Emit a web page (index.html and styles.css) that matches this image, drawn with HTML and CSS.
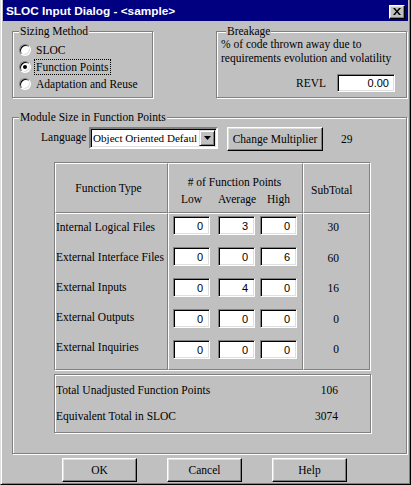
FILE: index.html
```html
<!DOCTYPE html>
<html>
<head>
<meta charset="utf-8">
<title>SLOC Input Dialog</title>
<link rel="stylesheet" href="styles.css">
</head>
<body>
<div class="window">
  <div class="titlebar">
    <span class="title">SLOC Input Dialog - &lt;sample&gt;</span>
    <span class="close"><svg width="8" height="7" viewBox="0 0 8 7"><path d="M0 0h2l2 2.4 2-2.4h2l-3 3.5 3 3.5h-2l-2-2.4-2 2.4h-2l3-3.5z" fill="#000"/></svg></span>
  </div>
  <div class="content">
    <div class="top-row">
      <fieldset class="group sizing">
        <legend>Sizing Method</legend>
        <div class="radio"><span class="radio-box"></span><span class="radio-text">SLOC</span></div>
        <div class="radio"><span class="radio-box checked"></span><span class="radio-text focus">Function Points</span></div>
        <div class="radio"><span class="radio-box"></span><span class="radio-text">Adaptation and Reuse</span></div>
      </fieldset>
      <fieldset class="group breakage">
        <legend>Breakage</legend>
        <p class="note">% of code thrown away due to<br>requirements evolution and volatility</p>
        <div class="revl-row"><span class="revl-label">REVL</span><span class="field revl">0.00</span></div>
      </fieldset>
    </div>
    <fieldset class="group module">
      <legend>Module Size in Function Points</legend>
      <div class="lang-row">
        <span class="lang-label">Language</span>
        <div class="select">
          <span class="select-text">Object Oriented Defaul</span>
          <span class="select-btn"><svg width="7" height="4" viewBox="0 0 7 4"><path d="M0 0h7l-3.5 4z" fill="#000"/></svg></span>
        </div>
        <span class="btn mult">Change Multiplier</span>
        <span class="mult-val">29</span>
      </div>
      <div class="fp-table">
        <div class="cell h-type">Function Type</div>
        <div class="cell h-points">
          <div class="h-title"># of Function Points</div>
          <div class="levels"><span class="lv low">Low</span><span class="lv avg">Average</span><span class="lv high">High</span></div>
        </div>
        <div class="cell h-sub">SubTotal</div>
        <div class="cell types">
          <div>Internal Logical Files</div>
          <div>External Interface Files</div>
          <div>External Inputs</div>
          <div>External Outputs</div>
          <div>External Inquiries</div>
        </div>
        <div class="cell inputs">
          <div class="fp-row"><span class="field fp low">0</span><span class="field fp avg">3</span><span class="field fp high">0</span></div>
          <div class="fp-row"><span class="field fp low">0</span><span class="field fp avg">0</span><span class="field fp high">6</span></div>
          <div class="fp-row"><span class="field fp low">0</span><span class="field fp avg">4</span><span class="field fp high">0</span></div>
          <div class="fp-row"><span class="field fp low">0</span><span class="field fp avg">0</span><span class="field fp high">0</span></div>
          <div class="fp-row"><span class="field fp low">0</span><span class="field fp avg">0</span><span class="field fp high">0</span></div>
        </div>
        <div class="cell subs">
          <div>30</div>
          <div>60</div>
          <div>16</div>
          <div>0</div>
          <div>0</div>
        </div>
      </div>
      <div class="totals">
        <div class="total-row"><span>Total Unadjusted Function Points</span><span>106</span></div>
        <div class="total-row second"><span>Equivalent Total in SLOC</span><span>3074</span></div>
      </div>
    </fieldset>
    <div class="buttons">
      <span class="btn dlg">OK</span>
      <span class="btn dlg">Cancel</span>
      <span class="btn dlg">Help</span>
    </div>
  </div>
</div>
</body>
</html>
```
FILE: styles.css
```css
* { box-sizing: border-box; }
html, body { margin: 0; padding: 0; }
body {
  width: 411px;
  height: 485px;
  overflow: hidden;
  background: #c0c0c0;
  font-family: "Liberation Serif", "Times New Roman", serif;
  font-size: 11.5px;
  color: #000;
}
.window {
  width: 411px;
  height: 485px;
  background: #c0c0c0;
  border-left: 1px solid #dfdfdf;
  border-right: 1px solid #000;
  border-bottom: 1px solid #000;
  box-shadow: inset 1px 0 #fff, inset -1px -1px #808080;
  padding: 0 2px 2px 2px;
  display: flex;
  flex-direction: column;
}
.titlebar {
  height: 21px;
  flex: none;
  background: #000080;
  display: flex;
  align-items: center;
  padding: 0 3px;
}
.title {
  color: #fff;
  font-family: "Liberation Sans", Arial, sans-serif;
  font-weight: bold;
  font-size: 11.8px;
  line-height: 14px;
}
.close {
  margin-left: auto;
  margin-top: 2px;
  width: 16px;
  height: 14px;
  background: #c0c0c0;
  border: 1px solid;
  border-color: #fff #000 #000 #fff;
  box-shadow: inset -1px -1px #808080, inset 1px 1px #dfdfdf;
  display: flex;
  align-items: center;
  justify-content: center;
}
.content {
  flex: 1;
  padding: 3px 1px 0 9px;
  display: flex;
  flex-direction: column;
}
.top-row {
  display: flex;
  justify-content: space-between;
  align-items: flex-start;
}
.group {
  margin: 0;
  min-width: 0;
  border: 1px solid #808080;
  box-shadow: inset 1px 1px #fff, 1px 1px #fff;
}
.group legend {
  padding: 0 1px;
  line-height: 14px;
  background: #c0c0c0;
}
.sizing {
  width: 141px;
  height: 74px;
  padding: 3px 6px 0 6px;
}
.radio {
  display: flex;
  align-items: center;
  height: 17px;
}
.radio-box {
  position: relative;
  width: 12px;
  height: 12px;
  border-radius: 50%;
  background: #fff;
  border: 1px solid;
  border-color: #808080 #fff #fff #808080;
  box-shadow: inset 1px 1px #000, inset -1px -1px #dfdfdf;
}
.radio-box.checked::after {
  content: "";
  position: absolute;
  left: 3px;
  top: 3px;
  width: 4px;
  height: 4px;
  border-radius: 50%;
  background: #000;
}
.radio-text {
  margin-left: 4px;
  padding: 0 1px;
  line-height: 14px;
}
.radio-text.focus { outline: 1px dotted #000; }
.breakage {
  width: 191px;
  height: 74px;
  padding: 0 11px 0 4px;
}
.breakage legend { margin-left: 5px; }
.note {
  margin: -1px 0 0 0;
  line-height: 14px;
}
.revl-row {
  display: flex;
  justify-content: flex-end;
  align-items: center;
  margin-top: 9px;
}
.revl-label { margin-right: 11px; }
.field {
  display: flex;
  align-items: center;
  justify-content: flex-end;
  background: #fff;
  border: 1px solid;
  border-color: #808080 #fff #fff #808080;
  box-shadow: inset 1px 1px #000, inset -1px -1px #dfdfdf;
  font-family: "Liberation Sans", Arial, sans-serif;
  font-size: 11px;
}
.revl {
  width: 58px;
  height: 18px;
  padding-right: 5px;
}
.module {
  margin-top: 12px;
  height: 344px;
  padding: 0 6px;
}
.lang-row {
  display: flex;
  align-items: flex-start;
  margin: 3px 0 0 22px;
}
.lang-label {
  width: 48px;
  flex: none;
  white-space: nowrap;
  line-height: 21px;
}
.select {
  width: 129px;
  height: 22px;
  flex: none;
  display: flex;
  background: #fff;
  border: 2px solid;
  border-color: #808080 #fff #fff #808080;
  box-shadow: inset 1px 1px #000, inset -1px -1px #dfdfdf;
  padding: 1px;
}
.select-text {
  flex: 1;
  min-width: 0;
  overflow: hidden;
  white-space: nowrap;
  font-size: 11.1px;
  line-height: 16px;
  padding-left: 1px;
}
.select-btn {
  flex: none;
  width: 16px;
  height: 16px;
  background: #c0c0c0;
  border: 1px solid;
  border-color: #dfdfdf #000 #000 #dfdfdf;
  box-shadow: inset 1px 1px #fff, inset -1px -1px #808080;
  display: flex;
  align-items: center;
  justify-content: center;
}
.btn {
  display: flex;
  align-items: center;
  justify-content: center;
  height: 24px;
  background: #c0c0c0;
  border: 1px solid;
  border-color: #fff #000 #000 #fff;
  box-shadow: inset -1px -1px #808080, inset 1px 1px #dfdfdf;
  white-space: nowrap;
}
.mult {
  width: 96px;
  flex: none;
  margin-left: 9px;
}
.mult-val {
  margin-left: 18px;
  line-height: 24px;
}
.fp-table {
  margin: 11px 0 0 35px;
  width: 317px;
  display: grid;
  grid-template-columns: 113px 135px 67px;
  grid-template-rows: 50px 157px;
  border-top: 1px solid #808080;
  border-left: 1px solid #808080;
  border-right: 1px solid #fff;
  border-bottom: 1px solid #fff;
}
.cell {
  border-top: 1px solid #fff;
  border-left: 1px solid #fff;
  border-right: 1px solid #808080;
  border-bottom: 1px solid #808080;
}
.h-type {
  display: flex;
  align-items: center;
  justify-content: center;
  padding-right: 6px;
  line-height: 14px;
}
.h-points {
  padding: 11px 0 0 4px;
  line-height: 14px;
}
.h-title {
  text-align: center;
  margin-left: -6px;
}
.levels {
  display: flex;
  margin-top: 3px;
}
.lv {
  width: 37px;
  text-align: center;
}
.avg { margin-left: 8px; }
.high { margin-left: 5px; }
.h-sub {
  padding: 19px 0 0 7px;
  line-height: 14px;
}
.types {
  padding-top: 6px;
  display: flex;
  flex-direction: column;
  gap: 16px;
  line-height: 14px;
  white-space: nowrap;
}
.inputs {
  padding: 2px 0 0 4px;
  display: flex;
  flex-direction: column;
  gap: 12px;
}
.fp-row { display: flex; }
.fp {
  width: 37px;
  height: 19px;
  padding-right: 6px;
}
.subs {
  padding: 6px 30px 0 0;
  display: flex;
  flex-direction: column;
  gap: 16.5px;
  line-height: 14px;
  text-align: right;
}
.totals {
  margin: 3px 0 0 35px;
  width: 317px;
  height: 59px;
  border: 1px solid #808080;
  box-shadow: inset 1px 1px #fff, 1px 1px #fff;
  padding: 8px 32px 0 1px;
  line-height: 14px;
}
.total-row {
  display: flex;
  justify-content: space-between;
}
.total-row.second { margin-top: 12px; }
.buttons {
  display: flex;
  gap: 30px;
  margin: 4px 0 0 50px;
}
.dlg { width: 75px; }
```
